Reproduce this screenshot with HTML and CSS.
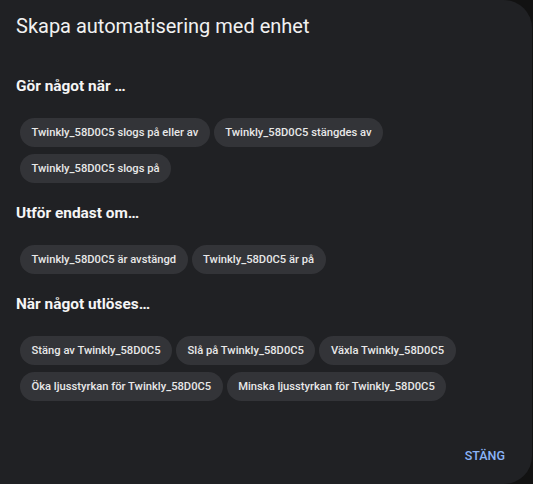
FILE: index.html
```html
<!DOCTYPE html>
<html>
	<head>
		<meta charset="UTF-8">
		<title>Skapa automatisering med enhet</title>
		<link rel="stylesheet" href="styles.css">
	</head>
	<body>
		<div class="dialog">
			<h2 class="title">Skapa automatisering med enhet</h2>
			<div class="section">
				<h3>Gör något när …</h3>
				<div class="chips">
					<span class="chip">Twinkly_58D0C5 slogs på eller av</span>
					<span class="chip">Twinkly_58D0C5 stängdes av</span>
					<span class="chip">Twinkly_58D0C5 slogs på</span>
				</div>
			</div>
			<div class="section">
				<h3>Utför endast om…</h3>
				<div class="chips">
					<span class="chip">Twinkly_58D0C5 är avstängd</span>
					<span class="chip">Twinkly_58D0C5 är på</span>
				</div>
			</div>
			<div class="section">
				<h3>När något utlöses…</h3>
				<div class="chips">
					<span class="chip">Stäng av Twinkly_58D0C5</span>
					<span class="chip">Slå på Twinkly_58D0C5</span>
					<span class="chip">Växla Twinkly_58D0C5</span>
					<span class="chip">Öka ljusstyrkan för Twinkly_58D0C5</span>
					<span class="chip">Minska ljusstyrkan för Twinkly_58D0C5</span>
				</div>
			</div>
			<div class="actions">
				<span class="button">STÄNG</span>
			</div>
		</div>
	</body>
</html>
```

FILE: styles.css
```css
body{
	margin: 0;
	padding: 0;
	background: #121212;
	font-family: Roboto, "Liberation Sans", sans-serif;
}
.dialog{
	width: 532px;
	height: 484px;
	box-sizing: border-box;
	background: #202124;
	border-radius: 0 28px 28px 0;
	padding: 10px 16px 0 16px;
	display: flex;
	flex-direction: column;
	color: #e3e3e3;
}
.title{
	margin: 0;
	font-size: 20px;
	line-height: 32px;
	font-weight: 400;
	color: #f1f1f1;
}
.section{
	margin-top: 18px;
}
.section:first-of-type{
	margin-top: 32px;
}
.section h3{
	margin: 0 0 20px 0;
	font-size: 15.4px;
	line-height: 24px;
	font-weight: 700;
	color: #f5f5f5;
}
.chips{
	display: flex;
	flex-wrap: wrap;
	gap: 7px 4px;
	padding-left: 4px;
}
.chip{
	height: 29px;
	line-height: 29px;
	padding: 0 11.5px;
	border-radius: 15px;
	background: #333438;
	font-size: 11.2px;
	font-weight: 500;
	color: #e8e8e8;
	white-space: nowrap;
}
.actions{
	margin-top: auto;
	display: flex;
	justify-content: flex-end;
	padding: 0 11px 20px 0;
}
.button{
	font-size: 12.5px;
	font-weight: 500;
	color: #8ab4f8;
	line-height: 16px;
}
```
